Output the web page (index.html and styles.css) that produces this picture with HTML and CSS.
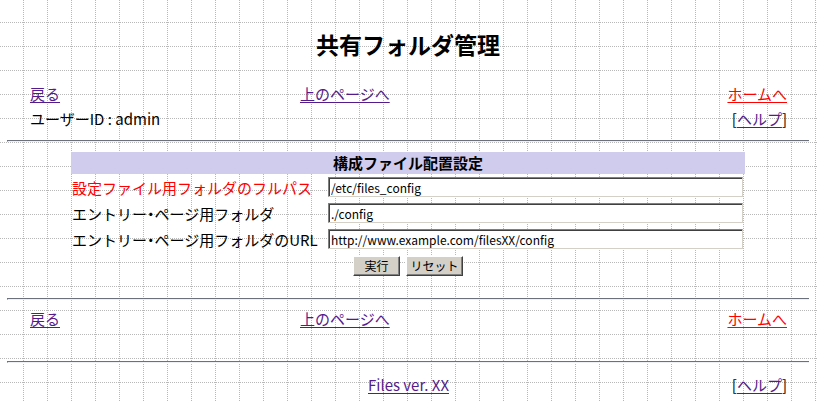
FILE: index.html
```html
<!DOCTYPE html>
<html lang="ja">
<head>
  <meta charset="UTF-8">
  <title>共有フォルダ管理</title>
  <link rel="stylesheet" href="styles.css">
</head>
<body>
  <div class="page">
    <h1 class="title">共有フォルダ管理</h1>

    <div class="nav">
      <a class="link visited" href="#">戻る</a>
      <a class="link visited" href="#">上のページへ</a>
      <a class="link home" href="#">ホームへ</a>
    </div>
    <div class="user-row">
      <span>ユーザーID : admin</span>
      <span>[<a class="link visited" href="#">ヘルプ</a>]</span>
    </div>

    <hr class="rule">

    <form class="config-form" onsubmit="return false">
      <div class="form-head">構成ファイル配置設定</div>
      <div class="form-row">
        <label class="field-label required">設定ファイル用フォルダのフルパス</label>
        <input class="field" type="text" value="/etc/files_config">
      </div>
      <div class="form-row">
        <label class="field-label">エントリー<b class="dot">･</b>ページ用フォルダ</label>
        <input class="field" type="text" value="./config">
      </div>
      <div class="form-row">
        <label class="field-label">エントリー<b class="dot">･</b>ページ用フォルダのURL</label>
        <input class="field" type="text" value="http://www.example.com/filesXX/config">
      </div>
      <div class="buttons">
        <button class="btn btn-run" type="submit">実行</button>
        <button class="btn btn-reset" type="reset">リセット</button>
      </div>
    </form>

    <hr class="rule">

    <div class="nav nav-bottom">
      <a class="link visited" href="#">戻る</a>
      <a class="link visited" href="#">上のページへ</a>
      <a class="link home" href="#">ホームへ</a>
    </div>

    <hr class="rule rule-last">

    <div class="footer">
      <span></span>
      <a class="link visited" href="#">Files ver. XX</a>
      <span class="footer-help">[<a class="link visited" href="#">ヘルプ</a>]</span>
    </div>
  </div>
</body>
</html>
```

FILE: styles.css
```css
html {
  background-color: #fff;
  background-image: url("data:image/svg+xml,%3Csvg xmlns='http://www.w3.org/2000/svg' width='24' height='24'%3E%3Cpath d='M23.5 0V24M0 22.5H24' stroke='%23b8b8b8' stroke-width='1' stroke-dasharray='1 1' fill='none'/%3E%3C/svg%3E");
  background-repeat: repeat;
}

body {
  margin: 0;
  font-family: "Noto Sans CJK JP", "Noto Sans", sans-serif;
  font-size: 15px;
  color: #000;
}

.page {
  padding: 0 9px 0 7px;
}

.title {
  margin: 29px 0 0;
  font-size: 23px;
  line-height: 30px;
  font-weight: bold;
  text-align: center;
}

.link {
  text-decoration: underline;
  text-underline-offset: 2px;
}

.visited {
  color: #551a8b;
}

.home {
  color: #ff0000;
}

.nav {
  display: grid;
  grid-template-columns: 270px 1fr auto;
  margin: 25px 22px 0 23px;
  line-height: 20px;
}

.nav-bottom {
  margin-top: 9px;
  margin-bottom: 32px;
}

.user-row {
  display: flex;
  justify-content: space-between;
  margin: 5px 22px 0 23px;
  line-height: 20px;
}

.rule {
  height: 0;
  margin: 11px 0 0;
  border: 0;
  border-top: 1px solid #6c707c;
  border-left: 1px solid #6c707c;
  border-bottom: 1px solid #eef0f6;
}

.rule-last {
  margin-top: 0;
}

.config-form {
  width: 674px;
  margin: 10px auto 22px;
}

.form-head {
  height: 22px;
  line-height: 22px;
  background: #d0ccee;
  font-weight: bold;
  text-align: center;
}

.form-row {
  display: grid;
  grid-template-columns: 257px 1fr;
  align-items: center;
  height: 26px;
}

.field-label {
  padding-left: 1px;
  white-space: nowrap;
}

.dot {
  font-weight: 900;
}

.required {
  color: #ff0000;
}

.field {
  box-sizing: border-box;
  width: 415px;
  height: 20px;
  padding: 0 2px;
  font-family: "Noto Sans CJK JP", "Noto Sans", sans-serif;
  font-size: 12px;
  color: #000;
  background: #fff;
  border: 1px solid;
  border-color: #808080 #d4d0c8 #d4d0c8 #808080;
  box-shadow: inset 1px 1px 0 #404040;
  outline: none;
}

.buttons {
  display: flex;
  justify-content: center;
  gap: 6px;
  margin: 4px 0 0;
}

.btn {
  height: 20px;
  padding: 0;
  font-family: "Noto Sans CJK JP", "Noto Sans", sans-serif;
  font-size: 12px;
  line-height: 16px;
  color: #000;
  background: #d4d0c8;
  border: 1px solid;
  border-color: #fff #404040 #404040 #fff;
  box-shadow: inset -1px -1px 0 #808080;
}

.btn-run {
  width: 47px;
}

.btn-reset {
  width: 57px;
}

.footer {
  display: grid;
  grid-template-columns: 1fr auto 1fr;
  margin: 12px 22px 0 23px;
  line-height: 20px;
}

.footer-help {
  text-align: right;
}
```
